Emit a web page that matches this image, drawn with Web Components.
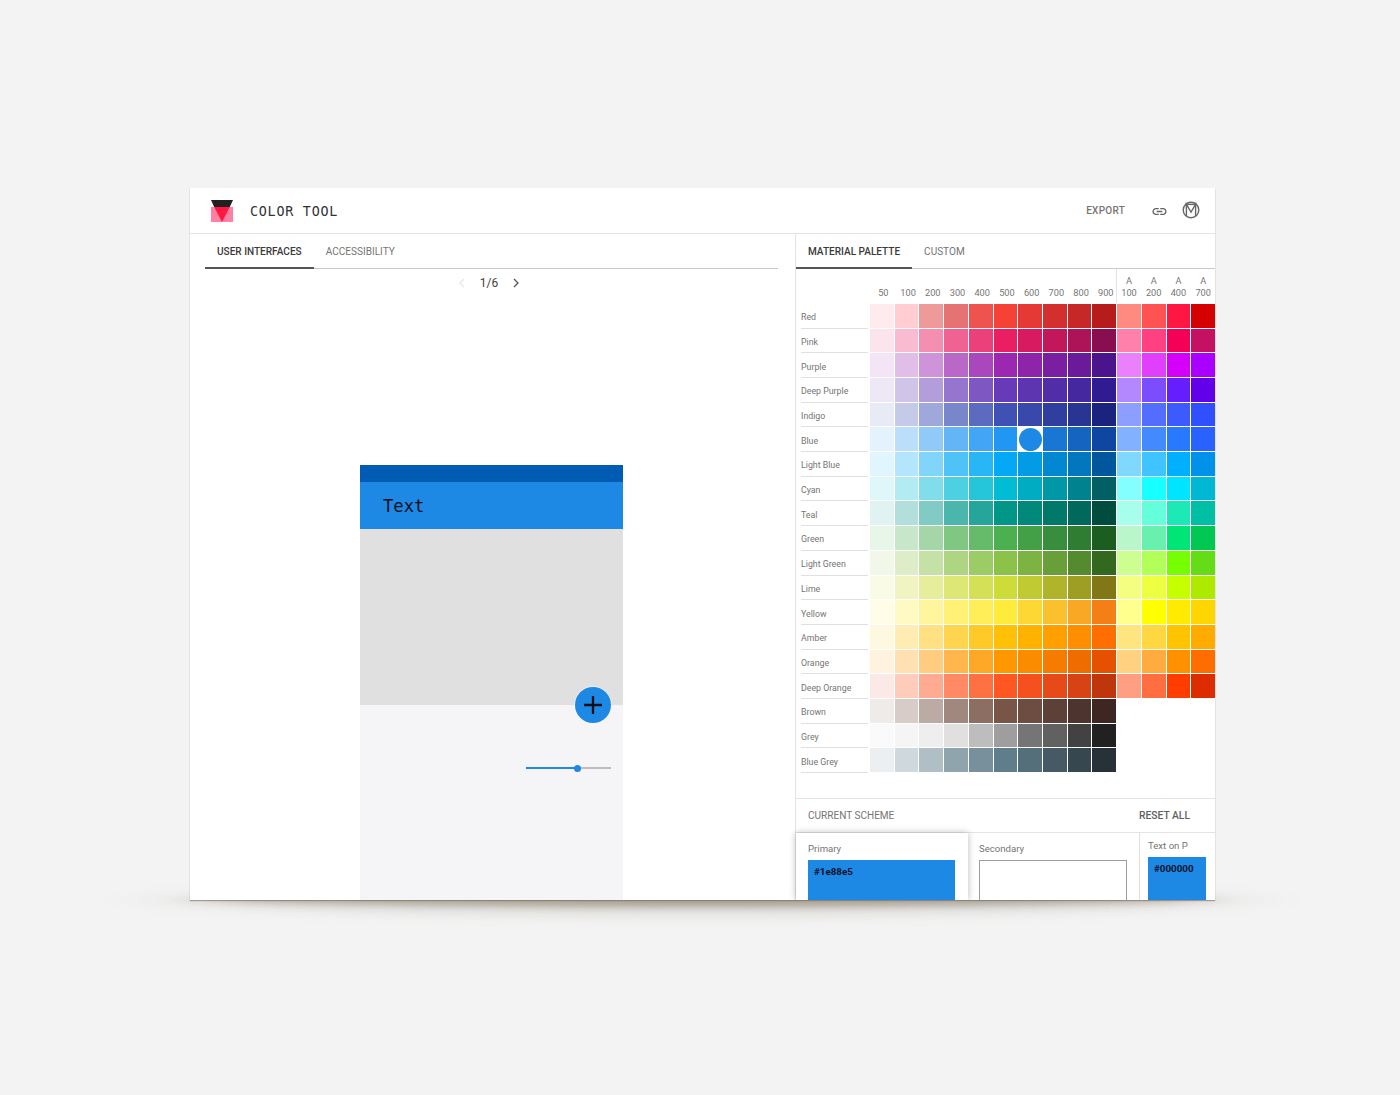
<!DOCTYPE html>
<html>
<head>
<meta charset="utf-8">
<title>Color Tool</title>
<style>
  html, body { margin: 0; height: 100%; }
  body {
    background: #f3f3f3;
    font-family: Roboto, "Liberation Sans", sans-serif;
    color: #757575;
    padding: 188px 0 0 190px;
    box-sizing: border-box;
    overflow: hidden;
  }
</style>
</head>
<body>
<color-tool-app>
  <app-header slot="header"></app-header>
  <preview-pane slot="left"></preview-pane>
  <palette-pane slot="right"></palette-pane>
</color-tool-app>

<script>
const PALETTE = [
  ["Red", "ffebee ffcdd2 ef9a9a e57373 ef5350 f44336 e53935 d32f2f c62828 b71c1c ff8a80 ff5252 ff1744 d50000"],
  ["Pink", "fce4ec f8bbd0 f48fb1 f06292 ec407a e91e63 d81b60 c2185b ad1457 880e4f ff80ab ff4081 f50057 c51162"],
  ["Purple", "f3e5f5 e1bee7 ce93d8 ba68c8 ab47bc 9c27b0 8e24aa 7b1fa2 6a1b9a 4a148c ea80fc e040fb d500f9 aa00ff"],
  ["Deep Purple", "ede7f6 d1c4e9 b39ddb 9575cd 7e57c2 673ab7 5e35b1 512da8 4527a0 311b92 b388ff 7c4dff 651fff 6200ea"],
  ["Indigo", "e8eaf6 c5cae9 9fa8da 7986cb 5c6bc0 3f51b5 3949ab 303f9f 283593 1a237e 8c9eff 536dfe 3d5afe 304ffe"],
  ["Blue", "e3f2fd bbdefb 90caf9 64b5f6 42a5f5 2196f3 selected 1976d2 1565c0 0d47a1 82b1ff 448aff 2979ff 2962ff"],
  ["Light Blue", "e1f5fe b3e5fc 81d4fa 4fc3f7 29b6f6 03a9f4 039be5 0288d1 0277bd 01579b 80d8ff 40c4ff 00b0ff 0091ea"],
  ["Cyan", "e0f7fa b2ebf2 80deea 4dd0e1 26c6da 00bcd4 00acc1 0097a7 00838f 006064 84ffff 18ffff 00e5ff 00b8d4"],
  ["Teal", "e0f2f1 b2dfdb 80cbc4 4db6ac 26a69a 009688 00897b 00796b 00695c 004d40 a7ffeb 64ffda 1de9b6 00bfa5"],
  ["Green", "e8f5e9 c8e6c9 a5d6a7 81c784 66bb6a 4caf50 43a047 388e3c 2e7d32 1b5e20 b9f6ca 69f0ae 00e676 00c853"],
  ["Light Green", "f1f8e9 dcedc8 c5e1a5 aed581 9ccc65 8bc34a 7cb342 689f38 558b2f 33691e ccff90 b2ff59 76ff03 64dd17"],
  ["Lime", "f9fbe7 f0f4c3 e6ee9c dce775 d4e157 cddc39 c0ca33 afb42b 9e9d24 827717 f4ff81 eeff41 c6ff00 aeea00"],
  ["Yellow", "fffde7 fff9c4 fff59d fff176 ffee58 ffeb3b fdd835 fbc02d f9a825 f57f17 ffff8d ffff00 ffea00 ffd600"],
  ["Amber", "fff8e1 ffecb3 ffe082 ffd54f ffca28 ffc107 ffb300 ffa000 ff8f00 ff6f00 ffe57f ffd740 ffc400 ffab00"],
  ["Orange", "fff3e0 ffe0b2 ffcc80 ffb74d ffa726 ff9800 fb8c00 f57c00 ef6c00 e65100 ffd180 ffab40 ff9100 ff6d00"],
  ["Deep Orange", "fbe9e7 ffccbc ffab91 ff8a65 ff7043 ff5722 f4511e e64a19 d84315 bf360c ff9e80 ff6e40 ff3d00 dd2c00"],
  ["Brown", "efebe9 d7ccc8 bcaaa4 a1887f 8d6e63 795548 6d4c41 5d4037 4e342e 3e2723"],
  ["Grey", "fafafa f5f5f5 eeeeee e0e0e0 bdbdbd 9e9e9e 757575 616161 424242 212121"],
  ["Blue Grey", "eceff1 cfd8dc b0bec5 90a4ae 78909c 607d8b 546e7a 455a64 37474f 263238"],
];
const SHADES = ["50", "100", "200", "300", "400", "500", "600", "700", "800", "900"];
const ACCENTS = ["100", "200", "400", "700"];

class Base extends HTMLElement {
  constructor() {
    super();
    this.attachShadow({ mode: "open" });
  }
  connectedCallback() {
    this.shadowRoot.innerHTML = this.markup();
  }
}

class ColorToolApp extends Base {
  markup() {
    return `
      <style>
        :host {
          display: block;
          position: relative;
          width: 1025px;
          height: 712px;
        }
        /* soft floor shadow under the card */
        .glow, .contact { position: absolute; }
        .glow {
          left: -95px;
          right: -95px;
          bottom: -20px;
          height: 40px;
          background: radial-gradient(ellipse closest-side, rgba(110,100,80,.2), rgba(110,100,80,.1) 75%, rgba(110,100,80,0));
          filter: blur(5px);
        }
        .contact {
          left: -28px;
          right: -28px;
          bottom: -8px;
          height: 16px;
          background: radial-gradient(ellipse closest-side, rgba(110,95,75,.5), rgba(110,95,75,.34) 85%, rgba(110,95,75,0));
          filter: blur(3px);
        }
        .card {
          position: relative;
          height: 100%;
          background: #fff;
          display: flex;
          flex-direction: column;
          overflow: hidden;
          box-shadow: 0 1px 1px rgba(120,105,85,.6);
        }
        .body { flex: 1; display: flex; min-height: 0; }
      </style>
      <div class="glow"></div>
      <div class="contact"></div>
      <div class="card">
        <slot name="header"></slot>
        <div class="body">
          <slot name="left"></slot>
          <slot name="right"></slot>
        </div>
      </div>
    `;
  }
}

class AppHeader extends Base {
  markup() {
    return `
      <style>
        :host {
          display: flex;
          align-items: center;
          height: 45px;
          flex: none;
          border-bottom: 1px solid #e4e4e4;
          padding: 0 15px 0 21px;
        }
        .logo { width: 22px; height: 22px; margin-right: 17px; margin-top: 1px; }
        h1 {
          margin: 0;
          font: 400 13.4px "DejaVu Sans Mono", "Liberation Mono", monospace;
          letter-spacing: .75px;
          color: #333;
          white-space: pre;
          flex: 1;
          position: relative;
          top: 1px;
        }
        .export { font-size: 10px; font-weight: 500; letter-spacing: .25px; color: #757575; margin-right: 25.5px; }
        .link { width: 17px; height: 17px; margin-right: 14.5px; fill: #666; display: block; position: relative; top: 1px; }
        .mark { width: 18px; height: 18px; display: block; margin-bottom: 1px; }
      </style>
      <svg class="logo" viewBox="0 0 22 22">
        <rect y="7" width="22" height="15" fill="#ff80a3"/>
        <polygon points="3.2,7 18.8,7 11,22" fill="#ff1744"/>
        <polygon points="0,0 22,0 18.8,7 3.2,7" fill="#212121"/>
      </svg>
      <h1>COLOR TOOL</h1>
      <span class="export">EXPORT</span>
      <svg class="link" viewBox="0 0 24 24"><path d="M3.9 12c0-1.71 1.39-3.1 3.1-3.1h4V7H7c-2.76 0-5 2.24-5 5s2.24 5 5 5h4v-1.9H7c-1.71 0-3.1-1.39-3.1-3.1zM8 13h8v-2H8v2zm9-6h-4v1.9h4c1.71 0 3.1 1.39 3.1 3.1s-1.39 3.1-3.1 3.1h-4V17h4c2.76 0 5-2.24 5-5s-2.24-5-5-5z"/></svg>
      <svg class="mark" viewBox="0 0 18 18" fill="none" stroke="#666" stroke-width="1.4">
        <circle cx="9" cy="9" r="7.8"/>
        <path d="M4.4 15V3.2L9 11l4.6-7.8V15"/>
        <path d="M3.5 3.4h11"/>
      </svg>
    `;
  }
}

class TabBar extends Base {
  markup() {
    const tabs = this.getAttribute("tabs").split(",");
    const items = tabs.map((t, i) => `<span class="tab ${i === 0 ? "on" : ""}">${t}</span>`).join("");
    return `
      <style>
        :host {
          display: flex;
          height: 34px;
          flex: none;
          border-bottom: 1px solid #c8c8c8;
          font-size: 10.06px;
        }
        .tab {
          padding: 0 12px;
          line-height: 36px;
          color: #757575;
          position: relative;
          height: 34px;
        }
        .on { color: #3a3a3a; font-weight: 500; }
        .on::after {
          content: "";
          position: absolute;
          left: 0;
          right: 0;
          bottom: -1px;
          height: 2px;
          background: #555;
        }
      </style>
      ${items}
    `;
  }
}

class PreviewPane extends Base {
  markup() {
    return `
      <style>
        :host {
          display: flex;
          flex-direction: column;
          width: 605px;
          flex: none;
          box-sizing: border-box;
          padding: 0 17px 0 15px;
        }
        .pager {
          display: flex;
          align-items: center;
          justify-content: center;
          height: 28px;
          font-size: 12px;
          color: #424242;
          margin-left: -3px;
        }
        .pager span { margin: 0 14px 0 14px; }
        svg { width: 8px; height: 10px; fill: none; stroke-width: 1.3; display: block; }
        svg.prev { margin-left: -2px; }
        phone-preview { margin: 168px 0 0 155px; flex: 1; min-height: 0; }
      </style>
      <tab-bar tabs="USER INTERFACES,ACCESSIBILITY"></tab-bar>
      <div class="pager">
        <svg class="prev" viewBox="0 0 8 10" stroke="#e6e6e6"><path d="M6 1L2 5l4 4"/></svg>
        <span>1/6</span>
        <svg viewBox="0 0 8 10" stroke="#555"><path d="M2 1l4 4-4 4"/></svg>
      </div>
      <phone-preview></phone-preview>
    `;
  }
}

class PhonePreview extends Base {
  markup() {
    return `
      <style>
        :host {
          display: flex;
          flex-direction: column;
          width: 263px;
          position: relative;
          background: #f5f5f7;
        }
        .status { height: 17px; background: #005cb2; flex: none; }
        .bar {
          height: 47px;
          flex: none;
          background: #1e88e5;
          display: flex;
          align-items: center;
          padding-left: 23px;
          font: 400 17.2px "DejaVu Sans Mono", "Liberation Mono", monospace;
          color: #0a1020;
        }
        .hero { height: 176px; background: #e0e0e0; flex: none; }
        .fab {
          position: absolute;
          left: 215px;
          top: 222px;
          width: 36px;
          height: 36px;
          border-radius: 50%;
          background: #1e88e5;
          box-shadow: 0 0 0 1px rgba(255,255,255,.35);
          display: flex;
          align-items: center;
          justify-content: center;
        }
        .fab svg { width: 20px; height: 20px; display: block; }
        .rest { flex: 1; display: flex; justify-content: flex-end; padding: 62px 12px 0 0; }
        .slider { width: 85px; height: 2px; background: #bdbdbd; position: relative; }
        .slider i { position: absolute; left: 0; top: 0; bottom: 0; width: 52px; background: #1e88e5; }
        .slider b {
          position: absolute;
          left: 48px;
          top: -2.5px;
          width: 7px;
          height: 7px;
          border-radius: 50%;
          background: #1e88e5;
        }
      </style>
      <div class="status"></div>
      <div class="bar">Text</div>
      <div class="hero"></div>
      <div class="rest"><div class="slider"><i></i><b></b></div></div>
      <div class="fab">
        <svg viewBox="0 0 20 20" stroke="#0a0f1a" stroke-width="2.3"><path d="M1 10h18M10 1v18"/></svg>
      </div>
    `;
  }
}

class PaletteGrid extends Base {
  markup() {
    const head = SHADES.map(s => `<span class="h shade">${s}</span>`).join("") +
      ACCENTS.map((s, i) => `<span class="h ${i === 0 ? "first" : ""}">A<br>${s}</span>`).join("");
    const rows = PALETTE.map(([name, colors]) => {
      const cells = colors.split(" ").map(c => {
        if (c === "selected") return `<span class="sel"><i></i></span>`;
        return `<span style="background:#${c}"></span>`;
      }).join("");
      const filler = colors.split(" ").length < 14 ? `<span class="none"></span>` : "";
      return `<span class="name">${name}</span>${cells}${filler}`;
    }).join("");
    return `
      <style>
        :host {
          display: grid;
          grid-template-columns: 73px repeat(14, 1fr);
          grid-template-rows: 34px repeat(19, 1fr);
          gap: 1px;
          height: 503px;
          flex: none;
          font-size: 9.2px;
          color: #757575;
        }
        .corner { grid-column: 1; }
        .h {
          display: flex;
          align-items: flex-end;
          justify-content: center;
          text-align: center;
          line-height: 12px;
          padding-bottom: 4px;
          box-sizing: border-box;
        }
        .shade { padding-left: 3px; }
        .first { box-shadow: -1px 0 0 #e4e4e4; }
        .name {
          margin: 0 1px -1px 5px;
          border-bottom: 1px solid #e0e0e0;
          display: flex;
          align-items: center;
          padding-top: 3px;
          box-sizing: border-box;
          font-size: 8.8px;
        }
        .none { grid-column: span 4; }
        .sel {
          background: #fff;
          margin: -1px -1px -1px 0;
          display: flex;
          align-items: center;
          justify-content: center;
          position: relative;
        }
        .sel i { width: 23.4px; height: 23.4px; border-radius: 50%; background: #1e88e5; flex: none; }
      </style>
      <span class="corner"></span>
      ${head}
      ${rows}
    `;
  }
}

class SchemeCard extends Base {
  markup() {
    const value = this.getAttribute("value") || "";
    const label = this.getAttribute("label");
    return `
      <style>
        :host {
          display: block;
          box-sizing: border-box;
          height: 100%;
          flex: none;
          width: 172px;
          padding: 10px 12px 0 11px;
          border-right: 1px solid #e0e0e0;
          font-size: 9.6px;
          color: #757575;
          overflow: hidden;
        }
        :host([raised]) {
          position: relative;
          border-right: 0;
          box-shadow: 0 0 7px rgba(0,0,0,.28);
          z-index: 1;
          padding: 10px 13px 0 12px;
        }
        :host([narrow]) { width: auto; flex: 1; border-right: 0; padding: 7px 9px 0 8px; }
        .label { height: 17px; line-height: 12px; }
        .swatch {
          height: 60px;
          box-sizing: border-box;
          background: #1e88e5;
          padding: 6px 6px;
          color: #06132a;
          font-weight: 700;
          font-size: 9.8px;
        }
        .empty { background: #fff; border: 1.5px solid #9e9e9e; }
      </style>
      <div class="label">${label}</div>
      <div class="swatch ${value ? "" : "empty"}">${value}</div>
    `;
  }
}

class PalettePane extends Base {
  markup() {
    return `
      <style>
        :host {
          display: flex;
          flex-direction: column;
          flex: 1;
          min-width: 0;
          border-left: 1px solid #e4e4e4;
        }
        .spacer { height: 26px; flex: none; }
        .head {
          height: 33px;
          flex: none;
          display: flex;
          align-items: center;
          justify-content: space-between;
          padding: 0 25px 0 12px;
          border-top: 1px solid #e4e4e4;
          border-bottom: 1px solid #e4e4e4;
          font-size: 10.06px;
          color: #757575;
        }
        .reset { font-weight: 500; color: #616161; font-size: 10.3px; }
        .cards { flex: 1; display: flex; min-height: 0; }
      </style>
      <tab-bar tabs="MATERIAL PALETTE,CUSTOM"></tab-bar>
      <palette-grid></palette-grid>
      <div class="spacer"></div>
      <div class="head"><span>CURRENT SCHEME</span><span class="reset">RESET ALL</span></div>
      <div class="cards">
        <scheme-card raised label="Primary" value="#1e88e5"></scheme-card>
        <scheme-card label="Secondary"></scheme-card>
        <scheme-card narrow label="Text on P" value="#000000"></scheme-card>
      </div>
    `;
  }
}

customElements.define("color-tool-app", ColorToolApp);
customElements.define("app-header", AppHeader);
customElements.define("tab-bar", TabBar);
customElements.define("preview-pane", PreviewPane);
customElements.define("phone-preview", PhonePreview);
customElements.define("palette-grid", PaletteGrid);
customElements.define("scheme-card", SchemeCard);
customElements.define("palette-pane", PalettePane);
</script>
</body>
</html>
